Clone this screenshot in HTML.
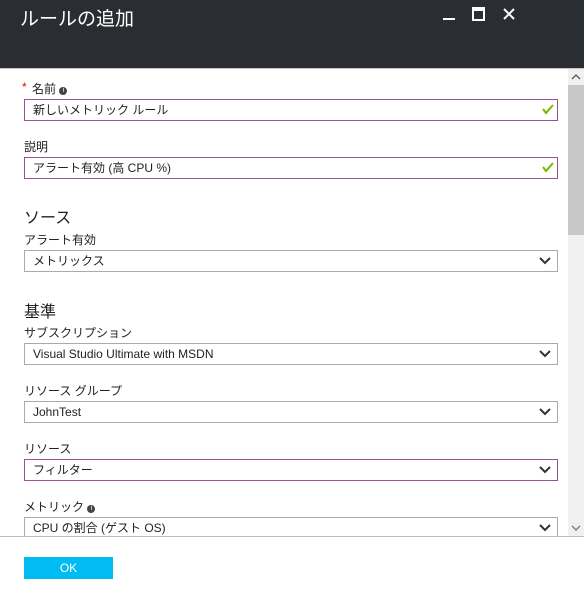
<html><head><style>
body{margin:0;width:584px;height:599px;overflow:hidden;background:#fff;font-family:"Liberation Sans","Noto Sans CJK JP",sans-serif;position:relative;color:#222}
.hd{position:absolute;left:0;top:0;width:584px;height:68px;background:#2a2e33;border-bottom:1px solid #c8c8c8}
.t{position:absolute;left:20px;top:4px;color:#fff;font-size:19px}
.a{position:absolute;font-size:12px;left:24px}
.h{position:absolute;font-size:16px;left:24px}
.f{position:absolute;left:24px;width:532px;height:20px;border:1px solid #aaa;font-size:12px;line-height:20px;box-sizing:content-box}
.f span{position:absolute;left:8px;top:0}
.p{border-color:#9b4f96}
.ck{position:absolute;right:3px;top:3px}
.dd{position:absolute;right:6px;top:6px}
.sb{position:absolute;left:568px;top:69px;width:16px;height:467px;background:#f0f0f0}
.th{position:absolute;left:568px;top:85px;width:16px;height:150px;background:#c8c8c8}
.ft{position:absolute;left:0;top:536px;width:584px;height:1px;background:#bbb}
.ok{position:absolute;left:24px;top:557px;width:89px;height:22px;background:#00bcf2;color:#fff;font-size:12px;text-align:center;line-height:22px}
</style></head><body>
<div class="hd"><div class="t">ルールの追加</div>
<div style="position:absolute;left:443px;top:18px;width:12px;height:2px;background:#fff"></div>
<div style="position:absolute;left:472px;top:7px;width:9px;height:8px;border:2px solid #fff;border-top-width:4px"></div>
<svg style="position:absolute;left:503px;top:8px" width="12" height="12"><path d="M1 1L11 11M11 1L1 11" stroke="#fff" stroke-width="2"/></svg>
</div>
<div class="sb"></div><div class="th"></div>
<svg style="position:absolute;left:571px;top:73px" width="10" height="8"><path d="M1 6L5 2L9 6" stroke="#555" fill="none" stroke-width="1.3"/></svg>
<svg style="position:absolute;left:571px;top:524px" width="10" height="8"><path d="M1 2L5 6L9 2" stroke="#777" fill="none" stroke-width="1.3"/></svg>

<div class="a" style="top:80px"><span style="color:#e00;position:absolute;left:-2px">*</span><span style="margin-left:8px">名前</span> <span style="display:inline-block;width:8px;height:8px;border-radius:50%;background:#444;color:#fff;font-size:7px;text-align:center;line-height:8px;vertical-align:1px">i</span></div>
<div class="f p" style="top:99px"><span>新しいメトリック ルール</span><svg class="ck" width="12" height="12"><path d="M1 6L4 10L11 2" stroke="#7ab800" stroke-width="2" fill="none"/></svg></div>
<div class="a" style="top:138px">説明</div>
<div class="f p" style="top:157px"><span>アラート有効 (高 CPU %)</span><svg class="ck" width="12" height="12"><path d="M1 6L4 10L11 2" stroke="#7ab800" stroke-width="2" fill="none"/></svg></div>
<div class="h" style="top:204px">ソース</div>
<div class="a" style="top:231px">アラート有効</div>
<div class="f" style="top:250px"><span>メトリックス</span><svg class="dd" width="12" height="8"><path d="M1 1L6 6L11 1" stroke="#333" stroke-width="2" fill="none"/></svg></div>
<div class="h" style="top:298px">基準</div>
<div class="a" style="top:324px">サブスクリプション</div>
<div class="f" style="top:343px"><span>Visual Studio Ultimate with MSDN</span><svg class="dd" width="12" height="8"><path d="M1 1L6 6L11 1" stroke="#333" stroke-width="2" fill="none"/></svg></div>
<div class="a" style="top:382px">リソース グループ</div>
<div class="f" style="top:401px"><span>JohnTest</span><svg class="dd" width="12" height="8"><path d="M1 1L6 6L11 1" stroke="#333" stroke-width="2" fill="none"/></svg></div>
<div class="a" style="top:440px">リソース</div>
<div class="f p" style="top:459px"><span>フィルター</span><svg class="dd" width="12" height="8"><path d="M1 1L6 6L11 1" stroke="#333" stroke-width="2" fill="none"/></svg></div>
<div class="a" style="top:498px">メトリック <span style="display:inline-block;width:8px;height:8px;border-radius:50%;background:#444;color:#fff;font-size:7px;text-align:center;line-height:8px;vertical-align:1px">i</span></div>
<div class="f" style="top:517px;height:19px;border-bottom:none;overflow:hidden"><span>CPU の割合 (ゲスト OS)</span><svg class="dd" width="12" height="8"><path d="M1 1L6 6L11 1" stroke="#333" stroke-width="2" fill="none"/></svg></div>
<div class="ft"></div>
<div class="ok">OK</div>
</body></html>
